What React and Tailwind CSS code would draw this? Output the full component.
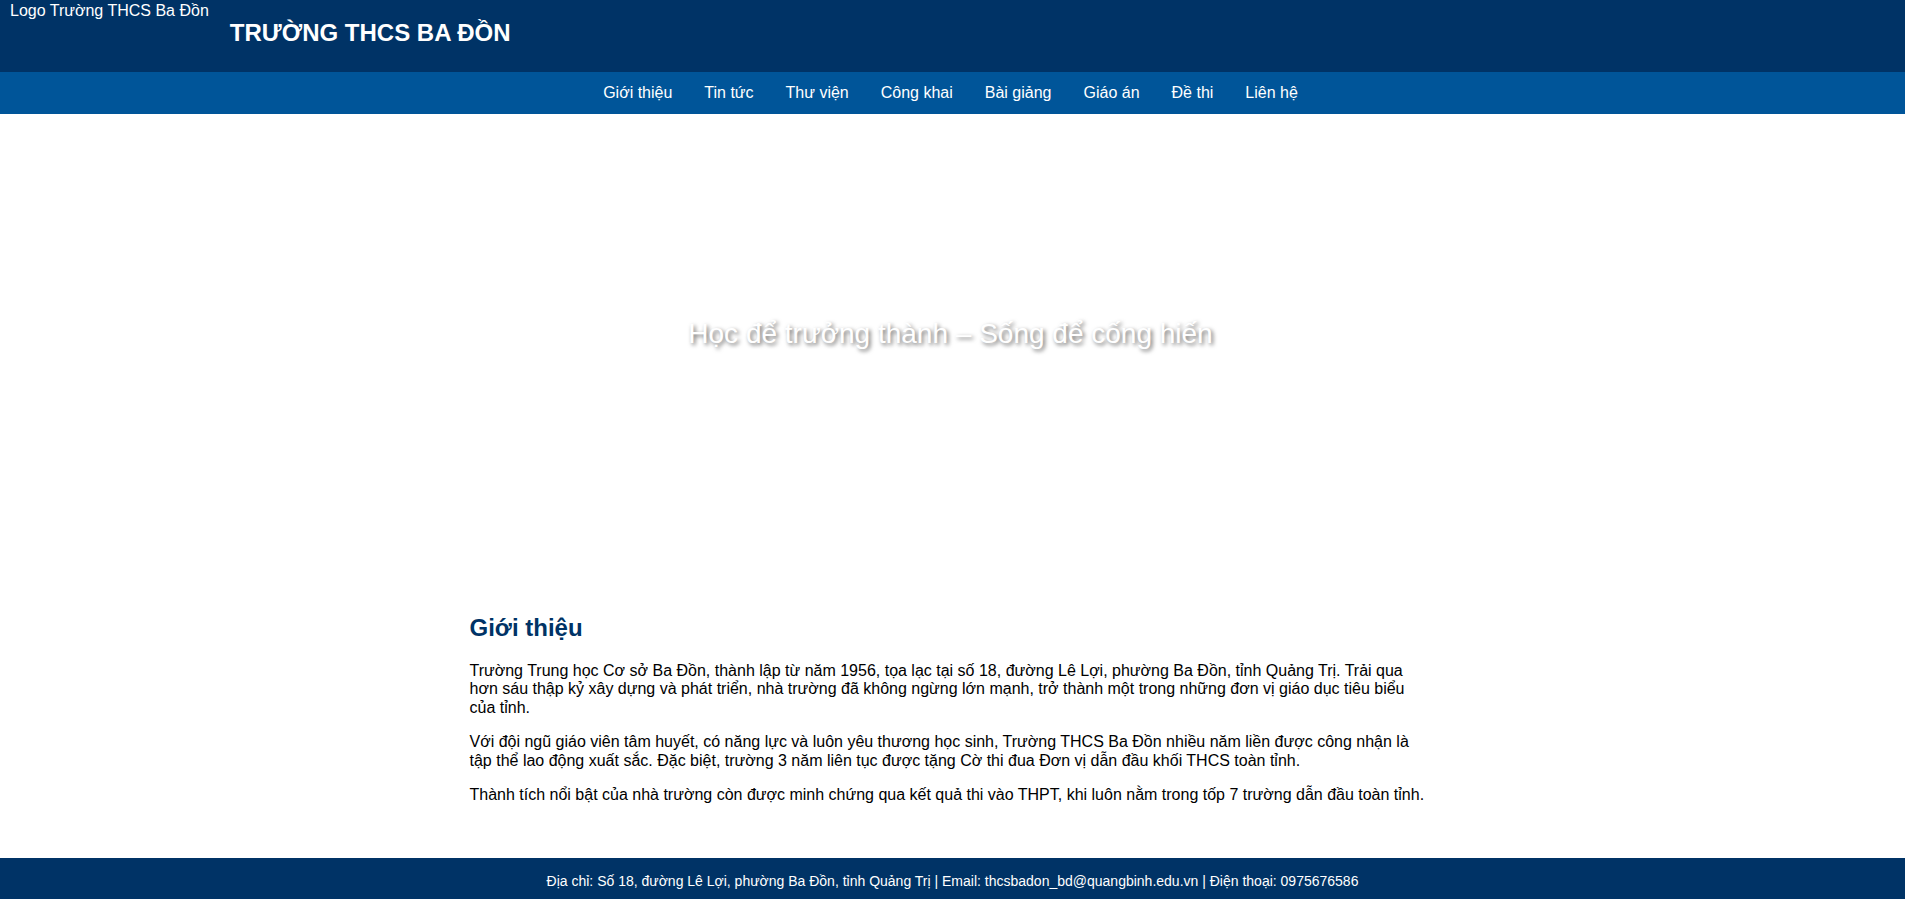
const NAV = ['Giới thiệu', 'Tin tức', 'Thư viện', 'Công khai', 'Bài giảng', 'Giáo án', 'Đề thi', 'Liên hệ']

export default function App() {
    return (
        <div className="min-h-screen bg-white text-black font-['Liberation_Sans',Arial,sans-serif]">
            {/* Header */}
            <header className="h-[72px] bg-[#003366] text-white flex items-start pl-[10px]">
                <span className="text-base leading-[18px] mt-[2px]">Logo Trường THCS Ba Đồn</span>
                <h1 className="ml-[21px] mt-[19px] text-2xl leading-[28px] font-bold">TRƯỜNG THCS BA ĐỒN</h1>
            </header>

            {/* Nav */}
            <nav className="h-[42px] bg-[#005599] flex items-center justify-center pr-1">
                {NAV.map(item => (
                    <a key={item} href="#" className="px-4 text-base text-white">{item}</a>
                ))}
            </nav>

            {/* Hero */}
            <section className="h-[440px] flex items-center justify-center pr-1">
                <p className="text-[28px] text-white [text-shadow:2px_2px_4px_rgba(0,0,0,0.6)]">
                    Học để trưởng thành – Sống để cống hiến
                </p>
            </section>

            {/* Intro */}
            <section className="max-w-[966px] mx-auto pr-[6px] pt-10 pb-[38px]">
                <h2 className="text-2xl font-bold text-[#003366] mt-5 mb-5 leading-[28px]">Giới thiệu</h2>
                <p className="text-base leading-[18.4px] mb-4">
                    Trường Trung học Cơ sở Ba Đồn, thành lập từ năm 1956, tọa lạc tại số 18, đường Lê Lợi, phường Ba Đồn, tỉnh Quảng Trị. Trải qua hơn sáu thập kỷ xây dựng và phát triển, nhà trường đã không ngừng lớn mạnh, trở thành một trong những đơn vị giáo dục tiêu biểu của tỉnh.
                </p>
                <p className="text-base leading-[18.4px] mb-4">
                    Với đội ngũ giáo viên tâm huyết, có năng lực và luôn yêu thương học sinh, Trường THCS Ba Đồn nhiều năm liền được công nhận là tập thể lao động xuất sắc. Đặc biệt, trường 3 năm liên tục được tặng Cờ thi đua Đơn vị dẫn đầu khối THCS toàn tỉnh.
                </p>
                <p className="text-base leading-[18.4px] mb-4">
                    Thành tích nổi bật của nhà trường còn được minh chứng qua kết quả thi vào THPT, khi luôn nằm trong tốp 7 trường dẫn đầu toàn tỉnh.
                </p>
            </section>

            {/* Footer */}
            <footer className="bg-[#003366] text-white text-center text-sm leading-4 py-[15px]">
                Địa chỉ: Số 18, đường Lê Lợi, phường Ba Đồn, tỉnh Quảng Trị | Email: thcsbadon_bd@quangbinh.edu.vn | Điện thoại: 0975676586
            </footer>
        </div>
    )
}
